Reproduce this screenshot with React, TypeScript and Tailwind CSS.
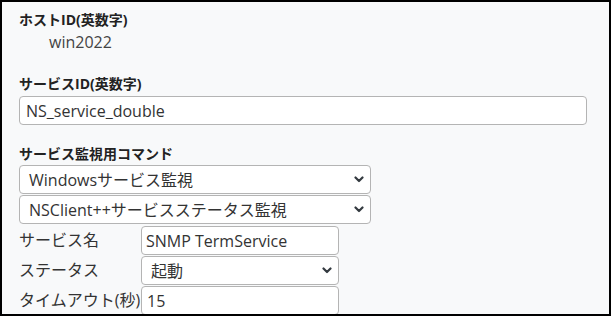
const font = { fontFamily: '"Open Sans", "Noto Sans CJK JP", sans-serif' };

function Chevron()
{
	return (
		<svg width="10" height="7" viewBox="0 0 10 7" className="shrink-0">
			<path d="M1.5 1.5 L5 5 L8.5 1.5" fill="none" stroke="#343a40" strokeWidth="2.2" strokeLinecap="round" strokeLinejoin="round" />
		</svg>
	);
}

function SelectBox({ value, className, padLeft }: { value: string; className: string; padLeft: string })
{
	return (
		<div className={`flex h-[29px] items-center justify-between rounded-[4px] border border-[#b4b4b4] bg-white pr-[6px] text-[16px] text-[#333] ${padLeft} ${className}`}>
			<span className="leading-none">{value}</span>
			<Chevron />
		</div>
	);
}

function Row({ label, children }: { label: string; children: React.ReactNode })
{
	return (
		<div className="flex items-center">
			<div className="w-[122px] shrink-0 text-[16px] leading-[29px] text-[#333] whitespace-nowrap">{label}</div>
			{children}
		</div>
	);
}

export default function App()
{
	return (
		<div style={font} className="h-[316px] w-[611px] overflow-hidden border-2 border-black bg-[#f8f9fa] pl-[17px] pt-[7.5px]">
			<div className="text-[14px] font-bold leading-[20px] text-[#222]">ホストID(英数字)</div>
			<div className="pl-[30px] text-[16px] leading-[24px] text-[#444]">win2022</div>

			<div className="mt-[20px] text-[14px] font-bold leading-[20px] text-[#222]">サービスID(英数字)</div>
			<div className="mt-[2.5px] flex h-[29px] w-[568px] items-center rounded-[4px] border border-[#b4b4b4] bg-white pl-[6px] text-[16px] text-[#333]">
				NS_service_double
			</div>

			<div className="mt-[18.5px] text-[14px] font-bold leading-[20px] text-[#222]">サービス監視用コマンド</div>
			<div className="mt-[1.5px] flex flex-col gap-[1px]">
				<SelectBox value="Windowsサービス監視" className="w-[352px]" padLeft="pl-[9px]" />
				<SelectBox value="NSClient++サービスステータス監視" className="w-[352px]" padLeft="pl-[9px]" />
			</div>

			<div className="mt-[2px] flex flex-col gap-[1px]">
				<Row label="サービス名">
					<div className="flex h-[29px] w-[198px] items-center rounded-[4px] border border-[#b4b4b4] bg-white pl-[4px] text-[16px] text-[#333]">
						SNMP TermService
					</div>
				</Row>
				<Row label="ステータス">
					<SelectBox value="起動" className="w-[198px]" padLeft="pl-[9px]" />
				</Row>
				<Row label="タイムアウト(秒)">
					<div className="flex h-[29px] w-[198px] items-center rounded-[4px] border border-[#b4b4b4] bg-white pl-[5px] text-[16px] text-[#333]">
						15
					</div>
				</Row>
			</div>
		</div>
	);
}
